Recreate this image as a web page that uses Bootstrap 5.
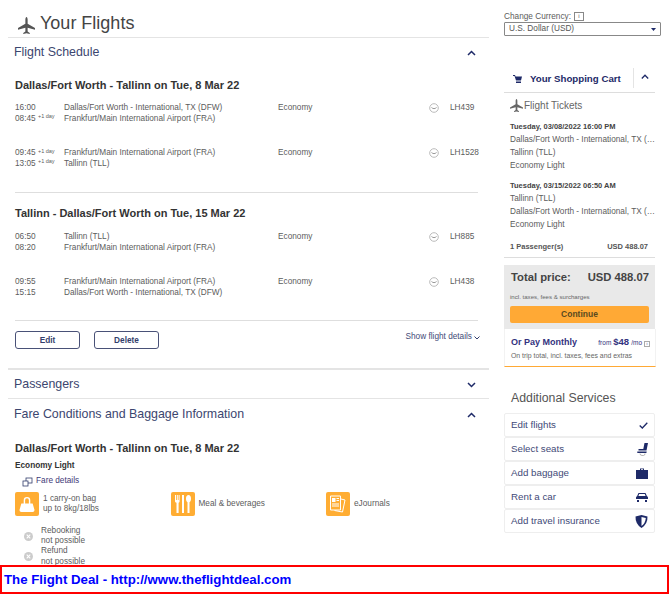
<!DOCTYPE html>
<html lang="en">
<head>
<meta charset="utf-8">
<title>Your Flights</title>
<link href="https://cdn.jsdelivr.net/npm/bootstrap@5.3.0/dist/css/bootstrap.min.css" rel="stylesheet">
<style>
html,body{height:594px;overflow:hidden}
body{font-family:"Liberation Sans",Arial,sans-serif;font-size:8.25px;line-height:10.5px;color:#5c5c5c;background:#fff;position:relative}
svg{display:block;flex:none}
.shell{padding:0 9px 0 8px;gap:15px;height:594px;overflow:hidden;align-items:flex-start}
.mainpane{width:481px;flex:none}
.sidepane{width:157px;flex:none}
.pagehead{height:38px;border-bottom:1px solid #e4e4e4;padding:13px 0 0 10px;gap:5px;font-size:18px;line-height:21px;color:#444}
.sechead{padding:0 13px 0 6px;font-size:12.4px;line-height:16px;color:#3c466f}
.sechead.sh1{height:28px;padding-top:6px}
.sechead.sh2{height:30px;padding-top:6px;border-top:2px solid #e4e4e4}
.sechead.sh3{height:30px;padding-top:7px;border-top:1px solid #e4e4e4}
.chev{width:9px;height:6px;margin-top:6px}
.bodypad{padding:0 11px 0 7px}
.route{font-size:11px;line-height:14px;font-weight:700;color:#333;margin:0}
.route.rfirst{margin-top:12px}
.route.rsecond{margin-top:13px}
.rowx{display:flex;height:45px}
.rowx.rowtop1{margin-top:11px}
.rowx.rowtop2{margin-top:12px}
.ctime{width:49px;flex:none;white-space:nowrap}
.ctime sup{font-size:5.5px;top:-.4em;line-height:0;position:relative;vertical-align:baseline}
.cplace{width:214px;flex:none}
.ccabin{width:151px;flex:none}
.cicon{width:21px;flex:none;padding-top:0}
.rulex{border-top:1px solid #dedede}
.rulex.rule1{margin-top:-1px}
.rulex.rule2{margin-top:-2px}
.actionrow{margin-top:10px;height:37px}
.btnx{width:65px;height:18px;border:1px solid #495177;border-radius:3px;padding:0;font-size:8.25px;font-weight:700;line-height:15px;color:#333e6c;background:#fff}
.btngap{gap:14px}
.linkx{font-size:8.25px;color:#3f4a77;gap:2px}
.showlink{margin:1px -2px 0 0}
.ftitle{font-size:8.25px;font-weight:700;color:#333;margin:5px 0 0;line-height:11px}
.farelink{margin:5px 0 0 7px;gap:3px;height:11px;color:#3f3a78}
.famenity{gap:4px;line-height:10.5px}
.amenrow{margin-top:5px;height:24px}
.fbox{width:24px;height:24px;background:#ffad33;border-radius:2px;display:flex;align-items:center;justify-content:center}
.fcell{width:155.5px;flex:none}
.xrow{gap:8px;padding-left:9px;height:20.5px}
.xrow.xfirst{margin-top:10px}
.curlabel{font-size:8.25px;line-height:11px;height:12px;margin-top:10px;gap:3px}
.infobox{width:10px;height:9px;border:1px solid #888;font-size:6px;line-height:7px;text-align:center}
.curselect{height:14px;border:1px solid #888;border-radius:1px;font-size:8.25px;line-height:12px;padding:0 4px;color:#555}
.cartbar{height:24px;margin-top:32px;color:#1e2a68;font-size:9.7px;font-weight:700}
.cartbar .carttxt{gap:8px;padding-left:9px;width:129px;height:22px;align-items:center}
.cartbar .cartchev{border-left:1px solid #e4e4e4;width:22px;height:20px;padding-left:7px;padding-top:6px}
.cartline{border-top:1px solid #ddd;width:151px}
.carttick{padding:0 7px 0 6px;width:151px}
.ticktitle{font-size:10px;line-height:14px;gap:1px;color:#666;height:25px;padding-top:6px}
.tick{line-height:13px;margin-top:7px}
.tick.tickfirst{margin-top:2px}
.tick div{white-space:nowrap}
.tick b{color:#444;font-size:7.5px}
.paxrow{font-size:7.5px;font-weight:700;margin-top:11px;color:#555;height:15px}
.totalbox{width:151px;background:#e9e9e9;padding:5px 6px 0;margin-top:7px;height:64px}
.totaltop{font-size:11.25px;line-height:14px;font-weight:700;color:#444;padding:0 0 0 1px}
.totalnote{font-size:6.1px;line-height:8px;margin-top:9px;color:#666}
.contbtn{display:block;width:100%;height:17px;margin-top:5px;border:0;border-radius:2px;background:#ffa935;font-size:8.5px;line-height:17px;font-weight:700;color:#5a4a20;padding:0}
.paybox{width:152px;height:38px;border-bottom:1px solid #ffa935;border-left:1px solid #f2f2f2;border-right:1px solid #f2f2f2;padding:7px 5px 0 6px;background:#fff}
.paytitle{font-size:9px;font-weight:700;color:#33327e;line-height:12px}
.payfrom{font-size:6.5px;color:#33327e;gap:2px;align-items:baseline}
.payfrom b{font-size:9.5px}
.payinfo{width:6px;height:6px;border:1px solid #aaa;font-size:4px;line-height:4px;text-align:center}
.paynote{font-size:6.9px;line-height:8px;margin-top:3px;color:#666}
.addhead{font-size:12.3px;line-height:16px;color:#555;margin:23px 0 7px 7px}
.svcgroup{width:151px}
.svcgroup .list-group-item{height:24px;padding:0 6px 0 6px;border:1px solid #eee;border-radius:2px;font-size:9.75px;line-height:22px;color:#3f4a77;margin:0;display:flex;justify-content:space-between;align-items:center}
.dealbar{position:absolute;left:0;top:565px;width:669px;height:29px;border:2px solid #f00;background:#fff;font-size:13.25px;line-height:26px;font-weight:700;color:#00f;padding-left:2px}
.dealbar a{color:#00f;text-decoration:none}
</style>
</head>
<body>
<div class="d-flex shell">
  <div class="mainpane">
    <div class="pagehead d-flex">
      <svg width="17" height="17" viewBox="0 0 24 24" class="mt-1"><path fill="#555" d="M12 0c1 0 1.600 2 1.600 4v5.500L24 15.500v2.500l-10.400-3v5.500l3 2.200V24L12 23l-4.600 1v-1.300l3-2.200V15L0 18v-2.500l10.400-6V4c0-2 .6-4 1.600-4z"/></svg>
      <span>Your Flights</span>
    </div>
    <div class="sechead sh1 d-flex justify-content-between">
      <span>Flight Schedule</span>
      <svg class="chev" viewBox="0 0 9 6"><path d="M1 5l3.500-3.500L8 5" fill="none" stroke="#1e2a68" stroke-width="1.500"/></svg>
    </div>
    <div class="bodypad">
      <h2 class="route rfirst">Dallas/Fort Worth - Tallinn on Tue, 8 Mar 22</h2>
      <div class="rowx rowtop1">
        <div class="ctime">16:00<br>08:45 <sup>+1 day</sup></div>
        <div class="cplace">Dallas/Fort Worth - International, TX (DFW)<br>Frankfurt/Main International Airport (FRA)</div>
        <div class="ccabin">Economy</div>
        <div class="cicon"><svg width="10" height="10" viewBox="0 0 10 10"><circle cx="5" cy="5" r="4.300" fill="none" stroke="#bbb"/><path d="M2.500 4.500c1.500 1.500 3.500 1.500 5 0" fill="none" stroke="#999"/></svg></div>
        <div>LH439</div>
      </div>
      <div class="rowx">
        <div class="ctime">09:45 <sup>+1 day</sup><br>13:05 <sup>+1 day</sup></div>
        <div class="cplace">Frankfurt/Main International Airport (FRA)<br>Tallinn (TLL)</div>
        <div class="ccabin">Economy</div>
        <div class="cicon"><svg width="10" height="10" viewBox="0 0 10 10"><circle cx="5" cy="5" r="4.300" fill="none" stroke="#bbb"/><path d="M2.500 4.500c1.500 1.500 3.500 1.500 5 0" fill="none" stroke="#999"/></svg></div>
        <div>LH1528</div>
      </div>
      <div class="rulex rule1"></div>
      <h2 class="route rsecond">Tallinn - Dallas/Fort Worth on Tue, 15 Mar 22</h2>
      <div class="rowx rowtop2">
        <div class="ctime">06:50<br>08:20</div>
        <div class="cplace">Tallinn (TLL)<br>Frankfurt/Main International Airport (FRA)</div>
        <div class="ccabin">Economy</div>
        <div class="cicon"><svg width="10" height="10" viewBox="0 0 10 10"><circle cx="5" cy="5" r="4.300" fill="none" stroke="#bbb"/><path d="M2.500 4.500c1.500 1.500 3.500 1.500 5 0" fill="none" stroke="#999"/></svg></div>
        <div>LH885</div>
      </div>
      <div class="rowx">
        <div class="ctime">09:55<br>15:15</div>
        <div class="cplace">Frankfurt/Main International Airport (FRA)<br>Dallas/Fort Worth - International, TX (DFW)</div>
        <div class="ccabin">Economy</div>
        <div class="cicon"><svg width="10" height="10" viewBox="0 0 10 10"><circle cx="5" cy="5" r="4.300" fill="none" stroke="#bbb"/><path d="M2.500 4.500c1.500 1.500 3.500 1.500 5 0" fill="none" stroke="#999"/></svg></div>
        <div>LH438</div>
      </div>
      <div class="rulex rule2"></div>
      <div class="d-flex justify-content-between actionrow">
        <div class="d-flex btngap"><button class="btnx" type="button">Edit</button><button class="btnx" type="button">Delete</button></div>
        <div class="linkx showlink d-flex align-items-start"><span>Show flight details</span><svg class="mt-1" width="6" height="4" viewBox="0 0 6 4"><path d="M.5.500L3 3 5.500.5" fill="none" stroke="#333e6c"/></svg></div>
      </div>
    </div>
    <div class="sechead sh2 d-flex justify-content-between">
      <span>Passengers</span>
      <svg class="chev" viewBox="0 0 9 6"><path d="M1 1l3.500 3.500L8 1" fill="none" stroke="#1e2a68" stroke-width="1.500"/></svg>
    </div>
    <div class="sechead sh3 d-flex justify-content-between">
      <span>Fare Conditions and Baggage Information</span>
      <svg class="chev" viewBox="0 0 9 6"><path d="M1 5l3.500-3.500L8 5" fill="none" stroke="#1e2a68" stroke-width="1.500"/></svg>
    </div>
    <div class="bodypad">
      <h2 class="route rsecond">Dallas/Fort Worth - Tallinn on Tue, 8 Mar 22</h2>
      <p class="ftitle">Economy Light</p>
      <div class="linkx farelink d-flex align-items-center">
        <svg width="11" height="10" viewBox="0 0 11 10"><rect x="4" y="1" width="6" height="5" fill="none" stroke="#333e6c" stroke-width=".8"/><rect x="1" y="4" width="5" height="5" fill="#fff" stroke="#333e6c" stroke-width=".8"/></svg>
        <span>Fare details</span>
      </div>
      <div class="d-flex amenrow">
        <div class="fcell d-flex famenity align-items-center">
          <div class="fbox"><svg width="16" height="16" viewBox="0 0 16 17"><path fill="#fff" d="M2 8h12l2 7q0 2-2 2H2q-2 0-2-2zM4.500 8V4.500a3.500 3.500 0 0 1 7 0V8h-1.500V4.500a2 2 0 0 0-4 0V8z"/></svg></div>
          <span>1 carry-on bag<br>up to 8kg/18lbs</span>
        </div>
        <div class="fcell d-flex famenity align-items-center">
          <div class="fbox"><svg width="16" height="18" viewBox="0 0 16 18"><path fill="#fff" d="M0 0h1v5h.8V0h1v5h.8V0h1v6.500q0 1-1 1.300V18H1.500V7.800q-1.500-.3-1.500-1.300zM7 0h2v18H7zM11 3.500c0-2 1-3.500 2.500-3.500S16 1.500 16 3.500c0 2-.7 3.400-1.500 3.800V18H12.500V7.300C11.700 6.900 11 5.500 11 3.500z"/></svg></div>
          <span>Meal &amp; beverages</span>
        </div>
        <div class="fcell d-flex famenity align-items-center">
          <div class="fbox"><svg width="18" height="18" viewBox="0 0 18 18"><path d="M1.500 1h10v14h-10z" fill="none" stroke="#fff"/><path d="M12 4l4 1-2.500 12-8-1.500" fill="none" stroke="#fff"/><rect x="3" y="3" width="3.500" height="4" fill="#fff"/><path d="M7.500 3.500h2.500M7.500 5.500h2.500M3 9h7M3 11h7" stroke="#fff"/></svg></div>
          <span>eJournals</span>
        </div>
      </div>
      <div class="d-flex align-items-center xrow xfirst">
        <svg width="9" height="9" viewBox="0 0 10 10"><circle cx="5" cy="5" r="5" fill="#ccc"/><path d="M3 3l4 4M7 3l-4 4" stroke="#fff" stroke-width="1.200"/></svg>
        <span>Rebooking<br>not possible</span>
      </div>
      <div class="d-flex align-items-center xrow">
        <svg width="9" height="9" viewBox="0 0 10 10"><circle cx="5" cy="5" r="5" fill="#ccc"/><path d="M3 3l4 4M7 3l-4 4" stroke="#fff" stroke-width="1.200"/></svg>
        <span>Refund<br>not possible</span>
      </div>
    </div>
  </div>
  <div class="sidepane">
    <div class="curlabel d-flex align-items-center"><span>Change Currency:</span><span class="infobox">i</span></div>
    <div class="curselect d-flex justify-content-between align-items-center"><span>U.S. Dollar (USD)</span><svg width="5" height="3" viewBox="0 0 5 3"><path d="M0 0h5L2.500 3z" fill="#1e2a68"/></svg></div>
    <div class="cartbar d-flex">
      <div class="carttxt d-flex"><svg width="9" height="8" viewBox="0 0 9 8"><path d="M0 0h2l.5 1.500H9L8 5.500H3L1.500 1H0zM3 6.500h5V8H3z" fill="#1e2a68"/></svg><span>Your Shopping Cart</span></div>
      <div class="cartchev"><svg width="8" height="5" viewBox="0 0 8 5"><path d="M.8 4.500L4 1.200l3.200 3.300" fill="none" stroke="#1e2a68" stroke-width="1.300"/></svg></div>
    </div>
    <div class="cartline"></div>
    <div class="carttick">
      <div class="ticktitle d-flex">
        <svg width="13" height="13" viewBox="0 0 24 24"><path fill="#666" d="M12 0c1 0 1.600 2 1.600 4v5.500L24 15.500v2.500l-10.400-3v5.500l3 2.200V24L12 23l-4.600 1v-1.300l3-2.200V15L0 18v-2.500l10.400-6V4c0-2 .6-4 1.600-4z"/></svg>
        <span>Flight Tickets</span>
      </div>
      <div class="tick tickfirst">
        <div><b>Tuesday, 03/08/2022 16:00 PM</b></div>
        <div>Dallas/Fort Worth - International, TX (…</div>
        <div>Tallinn (TLL)</div>
        <div>Economy Light</div>
      </div>
      <div class="tick">
        <div><b>Tuesday, 03/15/2022 06:50 AM</b></div>
        <div>Tallinn (TLL)</div>
        <div>Dallas/Fort Worth - International, TX (…</div>
        <div>Economy Light</div>
      </div>
      <div class="paxrow d-flex justify-content-between"><span>1 Passenger(s)</span><span>USD 488.07</span></div>
    </div>
    <div class="cartline"></div>
    <div class="totalbox">
      <div class="totaltop d-flex justify-content-between"><span>Total price:</span><span>USD 488.07</span></div>
      <div class="totalnote">incl. taxes, fees &amp; surcharges</div>
      <button class="contbtn" type="button">Continue</button>
    </div>
    <div class="paybox">
      <div class="d-flex justify-content-between align-items-baseline">
        <span class="paytitle">Or Pay Monthly</span>
        <span class="payfrom d-flex">from <b>$48</b>/mo <span class="payinfo">i</span></span>
      </div>
      <div class="paynote">On trip total, incl. taxes, fees and extras</div>
    </div>
    <div class="addhead">Additional Services</div>
    <div class="svcgroup list-group">
      <a class="list-group-item">Edit flights<svg width="9" height="7" viewBox="0 0 9 7"><path d="M.7 3.500L3.300 6 8.300.7" fill="none" stroke="#1e2a68" stroke-width="1.300"/></svg></a>
      <a class="list-group-item">Select seats<svg width="11" height="13" viewBox="0 0 11 13"><path d="M7.500 0H11L9.500 7.500H1.500V6H6.300zM.3 8.500h9.400l-.3 1.500H.3z" fill="#1e2a68"/><path d="M3 10.500q0 2 2 2h1.500q1.500 0 1.500-2" fill="none" stroke="#999" stroke-width=".7"/></svg></a>
      <a class="list-group-item">Add baggage<svg width="12" height="11" viewBox="0 0 12 11"><path d="M4 2V.5h4V2h4v9H0V2zm1 0h2V1.300H5z" fill="#1e2a68"/></svg></a>
      <a class="list-group-item">Rent a car<svg width="12" height="9" viewBox="0 0 12 9"><path d="M2.500 0h7L11 3.200q1 .4 1 1.300V6H0V4.500q0-.9 1-1.300zM3.200 1L2.400 3h7.200l-.8-2zM1 7h2v2H1zM9 7h2v2H9z" fill="#1e2a68"/></svg></a>
      <a class="list-group-item">Add travel insurance<svg width="13" height="13" viewBox="0 0 13 13"><path d="M6.500 0l6 1.500q.3 7.500-6 11.500Q.2 9 .5 1.500z" fill="#1e2a68"/><path d="M6.500 2v9Q10.500 8 10.800 3z" fill="#fff"/></svg></a>
    </div>
  </div>
</div>
<div class="dealbar"><a href="#">The Flight Deal - http://www.theflightdeal.com</a></div>
<script src="https://cdn.jsdelivr.net/npm/bootstrap@5.3.0/dist/js/bootstrap.bundle.min.js"></script>
</body>
</html>
